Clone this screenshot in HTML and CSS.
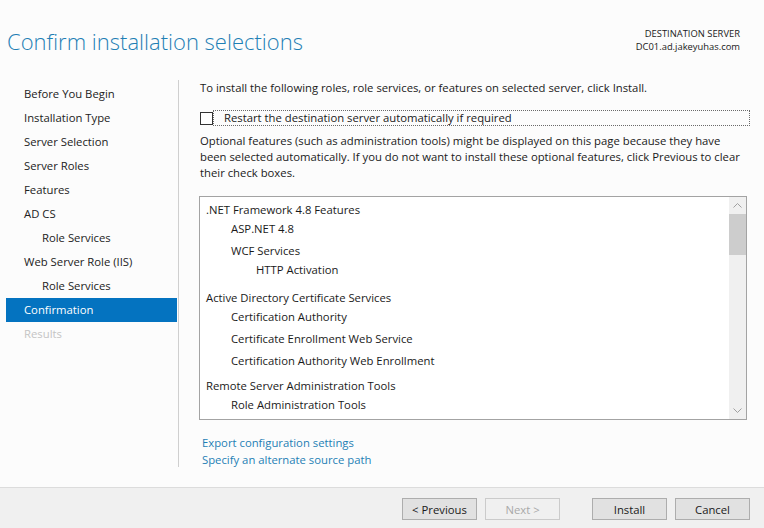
FILE: index.html
```html
<!DOCTYPE html>
<html>
<head>
<meta charset="utf-8">
<link rel="stylesheet" href="styles.css">
</head>
<body>
<div class="window">
  <header class="header">
    <h1 class="title">Confirm installation selections</h1>
    <div class="server">
      <div>DESTINATION SERVER</div>
      <div>DC01.ad.jakeyuhas.com</div>
    </div>
  </header>
  <div class="main">
    <nav class="nav">
      <div class="nav-item">Before You Begin</div>
      <div class="nav-item">Installation Type</div>
      <div class="nav-item">Server Selection</div>
      <div class="nav-item">Server Roles</div>
      <div class="nav-item">Features</div>
      <div class="nav-item">AD CS</div>
      <div class="nav-item sub">Role Services</div>
      <div class="nav-item">Web Server Role (IIS)</div>
      <div class="nav-item sub">Role Services</div>
      <div class="nav-item active">Confirmation</div>
      <div class="nav-item disabled">Results</div>
    </nav>
    <section class="content">
      <p class="intro">To install the following roles, role services, or features on selected server, click Install.</p>
      <div class="check-row">
        <span class="checkbox"></span>
        <span class="check-label">Restart the destination server automatically if required</span>
      </div>
      <p class="note">Optional features (such as administration tools) might be displayed on this page because they have been selected automatically. If you do not want to install these optional features, click Previous to clear their check boxes.</p>
      <div class="listbox">
        <div class="list">
          <div class="item l0">.NET Framework 4.8 Features</div>
          <div class="item l1">ASP.NET 4.8</div>
          <div class="item l1 g3">WCF Services</div>
          <div class="item l2">HTTP Activation</div>
          <div class="item l0 g9">Active Directory Certificate Services</div>
          <div class="item l1">Certification Authority</div>
          <div class="item l1 g3">Certificate Enrollment Web Service</div>
          <div class="item l1 g3">Certification Authority Web Enrollment</div>
          <div class="item l0 g6">Remote Server Administration Tools</div>
          <div class="item l1">Role Administration Tools</div>
        </div>
        <div class="scrollbar">
          <div class="arrow">
            <svg width="9" height="5" viewBox="0 0 9 5"><path d="M0.5 4.5 L4.5 0.5 L8.5 4.5" fill="none" stroke="#a0a0a0" stroke-width="1"/></svg>
          </div>
          <div class="thumb"></div>
          <div class="track"></div>
          <div class="arrow">
            <svg width="9" height="5" viewBox="0 0 9 5"><path d="M0.5 0.5 L4.5 4.5 L8.5 0.5" fill="none" stroke="#a0a0a0" stroke-width="1"/></svg>
          </div>
        </div>
      </div>
      <div class="links">
        <a class="link">Export configuration settings</a>
        <a class="link">Specify an alternate source path</a>
      </div>
    </section>
  </div>
  <footer class="footer">
    <div class="btn-group">
      <button class="btn">&lt; Previous</button>
      <button class="btn" disabled>Next &gt;</button>
    </div>
    <div class="btn-group">
      <button class="btn">Install</button>
      <button class="btn">Cancel</button>
    </div>
  </footer>
</div>
</body>
</html>
```

FILE: styles.css
```css
* { box-sizing: border-box; }
html, body {
  margin: 0;
  padding: 0;
  width: 764px;
  height: 528px;
  overflow: hidden;
}
body {
  font-family: "Open Sans", "Noto Sans", sans-serif;
  font-size: 11.3px;
  color: #1a1a1a;
  background: #fcfcfc;
}
.window {
  display: flex;
  flex-direction: column;
  height: 528px;
}
.header {
  height: 80px;
  display: flex;
  justify-content: space-between;
  align-items: flex-start;
}
.title {
  margin: 27px 0 0 7px;
  font-size: 22px;
  font-weight: 300;
  line-height: 28px;
  color: #1e7fb5;
}
.server {
  margin: 27px 24px 0 0;
  text-align: right;
  font-size: 9.4px;
  line-height: 13px;
  color: #1a1a1a;
}
.main {
  display: flex;
  height: 387px;
}
.nav {
  margin-left: 6px;
  width: 173px;
  padding-top: 2px;
  border-right: 1px solid #cfcfcf;
}
.nav-item {
  height: 24px;
  line-height: 24px;
  padding-left: 18px;
  margin-right: 1px;
  color: #222;
}
.nav-item.sub { padding-left: 36px; }
.nav-item.active {
  background: #0473c0;
  color: #fff;
}
.nav-item.disabled { color: #c4c4c4; }
.content {
  padding-left: 21px;
  width: 571px;
}
.intro {
  margin: 0;
  line-height: 16px;
}
.check-row {
  display: flex;
  align-items: center;
  margin-top: 14px;
  height: 16px;
}
.checkbox {
  width: 13px;
  height: 13px;
  border: 1px solid #333;
  background: #fff;
  flex: none;
}
.check-label {
  flex: 1;
  height: 16px;
  line-height: 14px;
  padding-left: 10px;
  border: 1px dotted #6a6a6a;
}
.note {
  margin: 7px 0 0;
  width: 546px;
  line-height: 16px;
}
.listbox {
  margin: 15px 0 0 -1px;
  width: 548px;
  height: 224px;
  border: 1px solid #a3a3a3;
  background: #fff;
  display: flex;
}
.list {
  flex: 1;
  overflow: hidden;
  padding-top: 3px;
}
.item {
  line-height: 19px;
  height: 19px;
  white-space: nowrap;
}
.l0 { padding-left: 6px; }
.l1 { padding-left: 31px; }
.l2 { padding-left: 56px; }
.g3 { margin-top: 3px; }
.g6 { margin-top: 6px; }
.g9 { margin-top: 9px; }
.scrollbar {
  width: 17px;
  background: #f0f0f0;
  display: flex;
  flex-direction: column;
}
.arrow {
  height: 17px;
  display: flex;
  align-items: center;
  justify-content: center;
}
.thumb {
  height: 41px;
  background: #cdcdcd;
}
.track { flex: 1; }
.links {
  margin-top: 14px;
  padding-left: 2px;
  display: flex;
  flex-direction: column;
}
.link {
  line-height: 17px;
  color: #1e7fb5;
}
.footer {
  margin-top: 20px;
  border-top: 1px solid #dcdcdc;
  background: #f0f0f0;
  flex: 1;
  display: flex;
  justify-content: flex-end;
  gap: 32px;
  padding: 10px 14px 0 0;
}
.btn-group {
  display: flex;
  gap: 8px;
  align-items: flex-start;
}
.btn {
  width: 75px;
  height: 22px;
  padding: 0;
  font-family: inherit;
  font-size: 11.3px;
  color: #1a1a1a;
  background: #e1e1e1;
  border: 1px solid #adadad;
  border-radius: 0;
}
.btn:disabled {
  color: #a8a8a8;
  background: #f0f0f0;
  border-color: #cbcbcb;
}
```
